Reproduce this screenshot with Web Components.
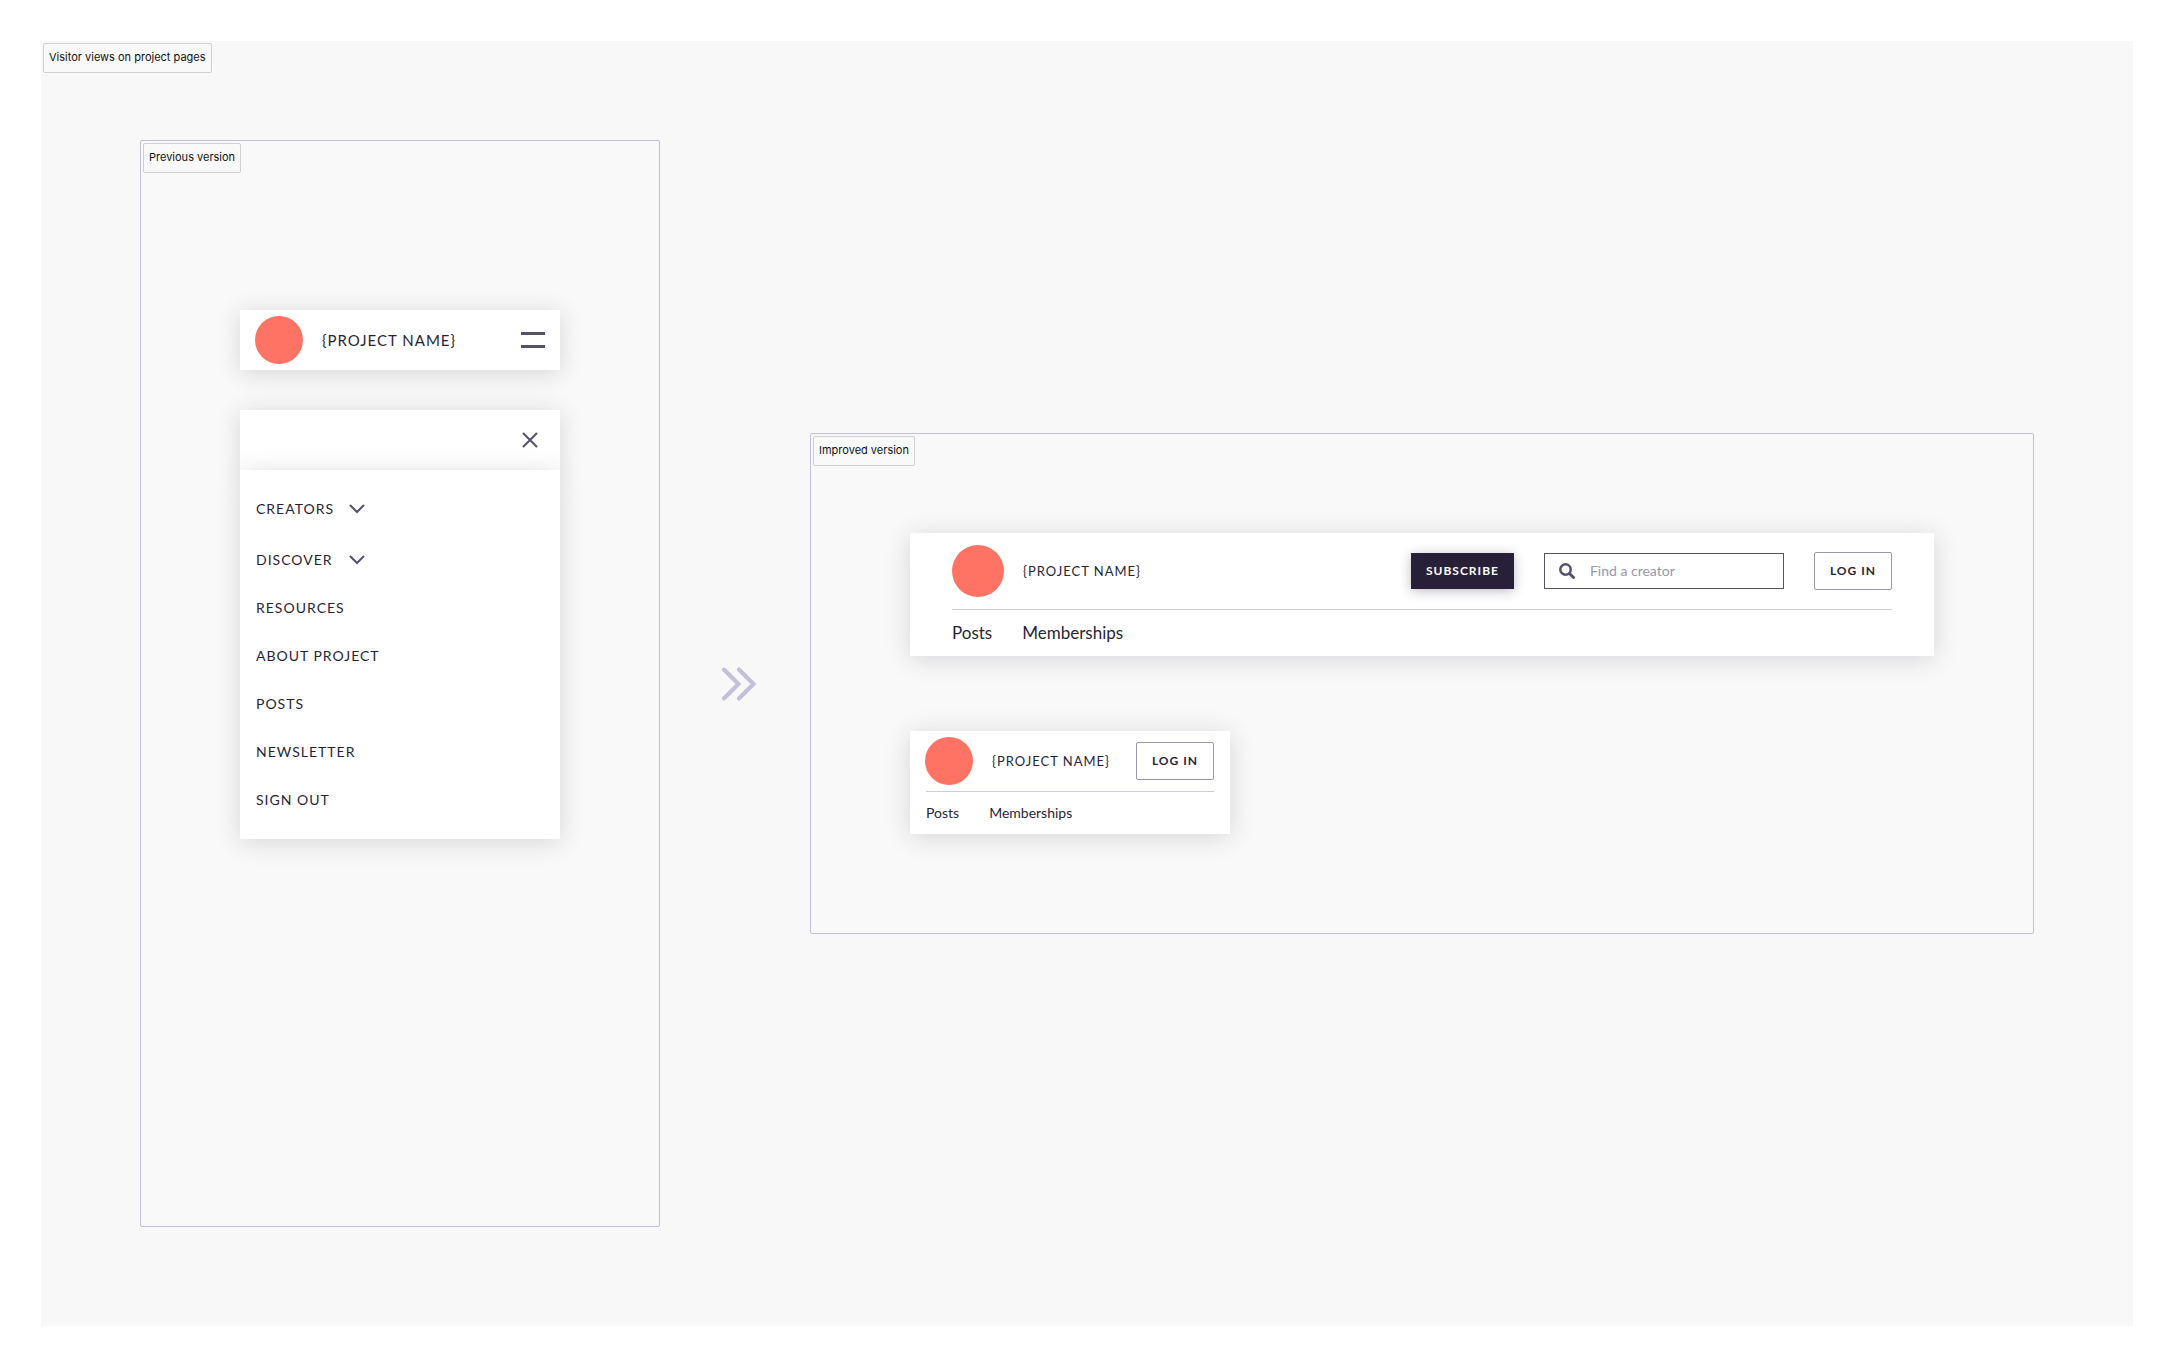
<!DOCTYPE html>
<html lang="en">
<head>
<meta charset="utf-8">
<title>Visitor views on project pages</title>
<style>
  :root {
    --ink: #281f38;
    --slate: #56506b;
    --mist: #9a96ab;
    --line: #c2bfd8;
    --rule: #cfcce0;
    --coral: #ff7365;
    --brand: Lato, "Liberation Sans", sans-serif;
    --shadow: 0 3px 24px rgba(34, 32, 52, .16);
  }
  body { margin: 0; background: #fff; color: var(--ink); font-family: var(--brand); }
</style>
</head>
<body>
<design-board>
  <board-frame name="Previous version" class="tall">
    <project-bar><menu-toggle></menu-toggle></project-bar>
    <side-menu>
      <menu-item expandable>Creators</menu-item>
      <menu-item expandable>Discover</menu-item>
      <menu-item>Resources</menu-item>
      <menu-item>About project</menu-item>
      <menu-item>Posts</menu-item>
      <menu-item>Newsletter</menu-item>
      <menu-item>Sign out</menu-item>
    </side-menu>
  </board-frame>
  <flow-arrow></flow-arrow>
  <board-frame name="Improved version" class="wide">
    <project-header size="large">
      <action-button kind="solid">Subscribe</action-button>
      <creator-search></creator-search>
      <action-button>Log in</action-button>
    </project-header>
    <project-header size="small">
      <action-button>Log in</action-button>
    </project-header>
  </board-frame>
</design-board>

<script>
  const define = (name, render) => customElements.define(name, class extends HTMLElement {
    constructor() {
      super();
      this.attachShadow({ mode: 'open' });
    }
    connectedCallback() {
      this.shadowRoot.innerHTML = '<style>*{box-sizing:border-box}</style>' + render(this);
    }
  });

  define('board-label', () => `
    <style>
      :host { display: block; width: fit-content; box-sizing: border-box; height: 30px; padding: 0 5px;
        border: 1px solid #d0d0d0; border-radius: 2px; background: #f9f9f9;
        font: 11px/26px Inter, sans-serif; color: #111; white-space: nowrap; }
    </style>
    <slot></slot>`);

  define('design-board', () => `
    <style>
      :host { display: flex; flex-direction: column; box-sizing: border-box; margin: 41px;
        min-height: calc(100vh - 82px); padding: 2px; background: #f8f8f8; }
      main { flex: 1; display: flex; align-items: center; padding: 67px 97px 97px; }
      ::slotted(.tall) { flex: 514 1 0; align-self: stretch; }
      ::slotted(.wide) { flex: 1218 1 0; }
    </style>
    <board-label>Visitor views on project pages</board-label>
    <main><slot></slot></main>`);

  define('board-frame', el => `
    <style>
      :host { display: block; box-sizing: border-box; padding: 2px; border: 1px solid var(--line);
        border-radius: 2px; background: #f9f9f9; }
      div { display: flex; flex-direction: column; padding: 67px 97px 97px; gap: 75px; }
      :host(.tall) div { padding-top: 137px; gap: 40px; align-items: center; }
    </style>
    <board-label>${el.getAttribute('name')}</board-label>
    <div><slot></slot></div>`);

  define('flow-arrow', () => `
    <style>
      :host { display: flex; box-sizing: border-box; flex: 0 0 150px; justify-content: center; padding-left: 8px; }
    </style>
    <svg width="36" height="34" viewBox="0 0 36 34" fill="none" stroke="#c2bfd8" stroke-width="4" stroke-linecap="round" stroke-linejoin="miter" aria-hidden="true">
      <path d="M3 2.500 17.500 17 3 31.500M18 2.500 32.500 17 18 31.500"/>
    </svg>`);

  define('project-avatar', () => `
    <style>
      :host { display: block; flex: none; width: 48px; height: 48px; border-radius: 50%; background: var(--coral); }
      :host([large]) { width: 52px; height: 52px; }
    </style>`);

  define('menu-toggle', () => `
    <style>
      :host { display: block; }
      button { display: block; padding: 0; border: 0; background: none; }
      svg { display: block; }
    </style>
    <button aria-label="Open menu"><svg width="24" height="16" viewBox="0 0 24 16" fill="#56506b"><path d="M0 0h24v3H0zM0 13h24v3H0z"/></svg></button>`);

  define('project-bar', () => `
    <style>
      :host { display: flex; align-items: center; box-sizing: border-box; width: 100%; max-width: 320px;
        padding: 6px 15px; background: #fff; box-shadow: var(--shadow); }
      span { flex: 1; margin-left: 19px; font-size: 15px; line-height: 20px; letter-spacing: 1px; white-space: nowrap; }
    </style>
    <project-avatar></project-avatar>
    <span>{PROJECT NAME}</span>
    <slot></slot>`);

  define('side-menu', () => `
    <style>
      :host { display: block; width: 100%; max-width: 320px; }
      header { display: flex; align-items: center; justify-content: flex-end; height: 60px; padding: 0 22px;
        background: #fff; box-shadow: var(--shadow); }
      button { display: block; padding: 0; border: 0; background: none; }
      svg { display: block; }
      nav { padding: 15px 16px; background: #fff; box-shadow: var(--shadow); clip-path: inset(-24px -60px -60px -60px); }
      ::slotted(:first-child) { margin-bottom: 3px; }
    </style>
    <header>
      <button aria-label="Close menu"><svg width="16" height="16" viewBox="0 0 16 16" fill="none" stroke="#56506b" stroke-width="2" stroke-linecap="round"><path d="M1.500 1.500l13 13M14.500 1.500l-13 13"/></svg></button>
    </header>
    <nav><slot></slot></nav>`);

  define('menu-item', el => {
    const expandable = el.hasAttribute('expandable');
    return `
    <style>
      :host { display: block; }
      a, button { display: flex; align-items: center; justify-content: space-between; width: fit-content; height: 48px; padding: 0; border: 0;
        background: none; color: var(--ink); font: 14px/20px var(--brand); letter-spacing: 1px; text-transform: uppercase; text-decoration: none; }
      button { width: 109px; }
    </style>
    ${expandable
      ? `<button aria-expanded="false"><slot></slot><svg width="16" height="10" viewBox="0 0 16 10" fill="none" stroke="#56506b" stroke-width="2" stroke-linecap="round"><path d="M1.500 1.500 8 8l6.500-6.500"/></svg></button>`
      : `<a href="#"><slot></slot></a>`}`;
  });

  define('action-button', () => `
    <style>
      :host { display: block; }
      button { display: block; height: 38px; padding: 0 15px; border: 1px solid var(--mist); border-radius: 2px; background: #fff;
        color: var(--ink); font: bold 12px/20px var(--brand); letter-spacing: 1px; text-transform: uppercase; white-space: nowrap; }
      :host([kind=solid]) button { height: 36px; border: 0; border-radius: 0; background: var(--ink); color: #fff;
        box-shadow: 0 2px 12px rgba(40, 31, 56, .3); }
    </style>
    <button><slot></slot></button>`);

  define('creator-search', () => `
    <style>
      :host { display: block; }
      label { display: flex; align-items: center; gap: 15px; width: 240px; height: 36px; padding: 0 14px; border: 1px solid var(--slate); background: #fff; }
      svg { flex: none; }
      input { flex: 1; min-width: 0; padding: 0; border: 0; outline: 0; background: none; color: var(--ink); font: 14px/20px var(--brand); }
      input::placeholder { color: var(--mist); opacity: 1; }
    </style>
    <label>
      <svg width="16" height="16" viewBox="0 0 16 16" fill="none" stroke="#56506b" stroke-width="2.500" aria-hidden="true"><circle cx="6.500" cy="6.500" r="5.200"/><path d="M10.500 10.500l4 4" stroke-width="3" stroke-linecap="round"/></svg>
      <input type="search" placeholder="Find a creator" aria-label="Find a creator">
    </label>`);

  define('project-header', el => {
    const large = el.getAttribute('size') === 'large';
    return `
    <style>
      :host { display: block; box-sizing: border-box; padding: 0 16px; background: #fff; box-shadow: var(--shadow); }
      :host([size=small]) { width: 100%; max-width: 320px; }
      :host([size=large]) { padding: 0 42px; }
      header { display: flex; align-items: center; gap: 24px; padding: 6px 0; margin-left: -1px; }
      :host([size=large]) header { padding: 12px 0; gap: 30px; margin-left: 0; }
      .project { flex: 1; display: flex; align-items: center; gap: 19px; font-size: 13px; line-height: 20px; letter-spacing: 1px; white-space: nowrap; }
      nav { display: flex; align-items: center; gap: 30px; height: 43px; border-top: 1px solid var(--rule); font-size: 14px; line-height: 20px; }
      :host([size=large]) nav { height: 47px; font-size: 17px; }
      a { color: var(--ink); text-decoration: none; }
    </style>
    <header>
      <div class="project"><project-avatar${large ? ' large' : ''}></project-avatar><span>{PROJECT NAME}</span></div>
      <slot></slot>
    </header>
    <nav><a href="#">Posts</a><a href="#">Memberships</a></nav>`;
  });
</script>
</body>
</html>
